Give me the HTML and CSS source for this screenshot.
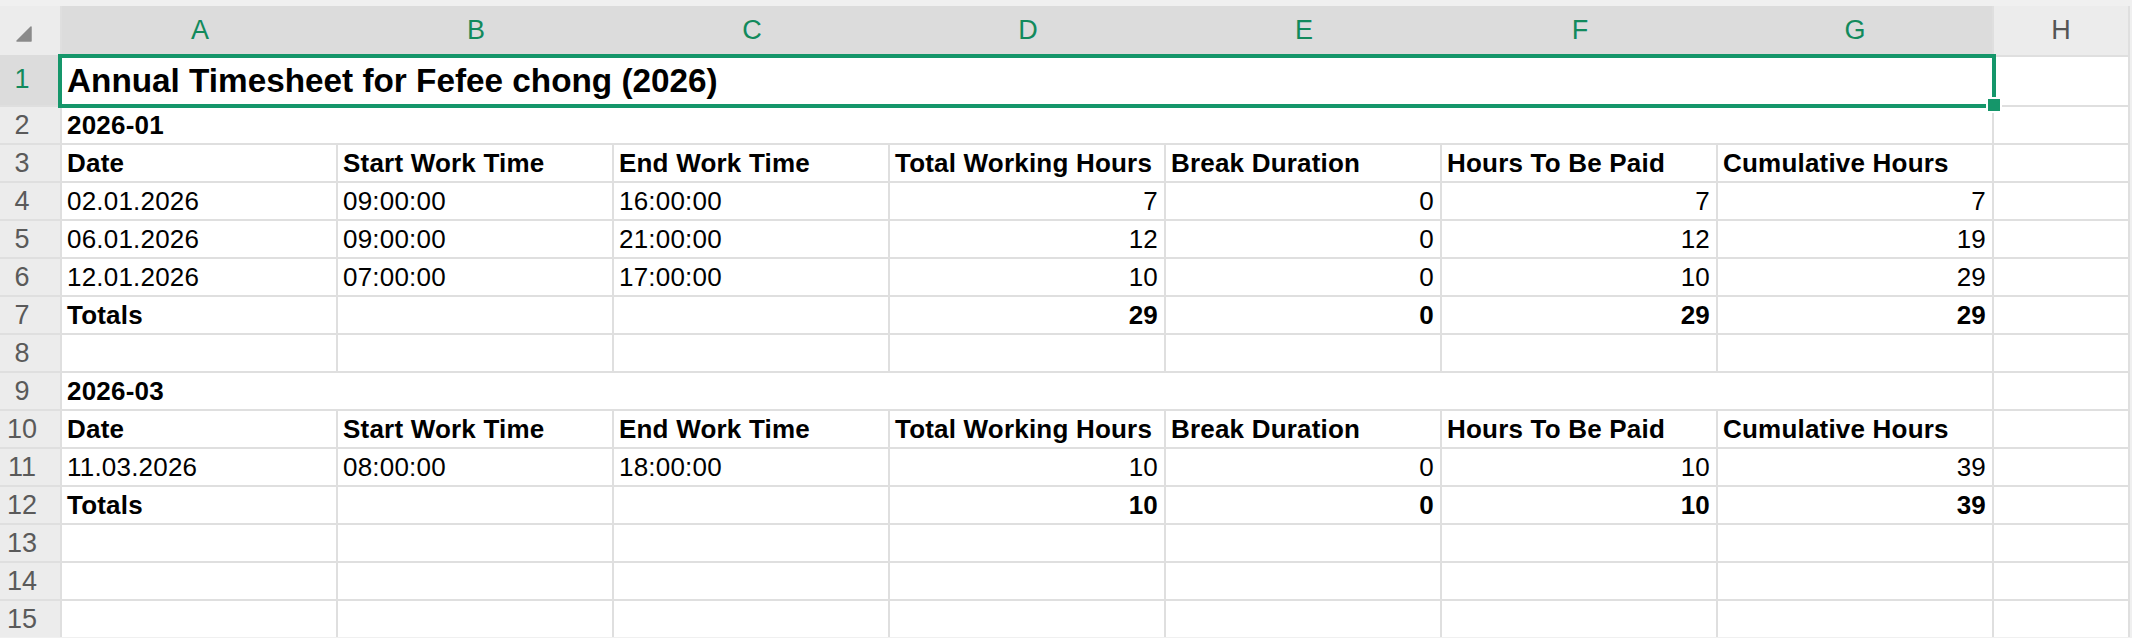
FILE: index.html
```html
<!DOCTYPE html>
<html lang="en">
<head>
  <meta charset="UTF-8">
  <title>Annual Timesheet</title>
  <link rel="stylesheet" href="styles.css">
</head>
<body>

  <div class="workbook">
    <div class="sheet">
      <!-- Column headers -->
      <div class="corner">
        <svg width="16" height="16" viewBox="0 0 16 16"><path d="M15 1 L15 15 L1 15 Z" fill="#8a8a8a" stroke="#8a8a8a" stroke-width="1.5" stroke-linejoin="round"/></svg>
      </div>
      <div class="col-head sel">A</div>
      <div class="col-head sel">B</div>
      <div class="col-head sel">C</div>
      <div class="col-head sel">D</div>
      <div class="col-head sel">E</div>
      <div class="col-head sel">F</div>
      <div class="col-head sel">G</div>
      <div class="col-head">H</div>

      <!-- Row 1 -->
      <div class="row-head sel tall">1</div>
      <div class="cell wide title">Annual Timesheet for Fefee chong (2026)</div>
      <div class="cell"></div>

      <!-- Row 2 -->
      <div class="row-head">2</div>
      <div class="cell wide b">2026-01</div>
      <div class="cell"></div>

      <!-- Row 3 -->
      <div class="row-head">3</div>
      <div class="cell b">Date</div>
      <div class="cell b">Start Work Time</div>
      <div class="cell b">End Work Time</div>
      <div class="cell b">Total Working Hours</div>
      <div class="cell b">Break Duration</div>
      <div class="cell b">Hours To Be Paid</div>
      <div class="cell b">Cumulative Hours</div>
      <div class="cell"></div>

      <!-- Row 4 -->
      <div class="row-head">4</div>
      <div class="cell">02.01.2026</div>
      <div class="cell">09:00:00</div>
      <div class="cell">16:00:00</div>
      <div class="cell num">7</div>
      <div class="cell num">0</div>
      <div class="cell num">7</div>
      <div class="cell num">7</div>
      <div class="cell"></div>

      <!-- Row 5 -->
      <div class="row-head">5</div>
      <div class="cell">06.01.2026</div>
      <div class="cell">09:00:00</div>
      <div class="cell">21:00:00</div>
      <div class="cell num">12</div>
      <div class="cell num">0</div>
      <div class="cell num">12</div>
      <div class="cell num">19</div>
      <div class="cell"></div>

      <!-- Row 6 -->
      <div class="row-head">6</div>
      <div class="cell">12.01.2026</div>
      <div class="cell">07:00:00</div>
      <div class="cell">17:00:00</div>
      <div class="cell num">10</div>
      <div class="cell num">0</div>
      <div class="cell num">10</div>
      <div class="cell num">29</div>
      <div class="cell"></div>

      <!-- Row 7 -->
      <div class="row-head">7</div>
      <div class="cell b">Totals</div>
      <div class="cell"></div>
      <div class="cell"></div>
      <div class="cell num b">29</div>
      <div class="cell num b">0</div>
      <div class="cell num b">29</div>
      <div class="cell num b">29</div>
      <div class="cell"></div>

      <!-- Row 8 -->
      <div class="row-head">8</div>
      <div class="cell"></div>
      <div class="cell"></div>
      <div class="cell"></div>
      <div class="cell"></div>
      <div class="cell"></div>
      <div class="cell"></div>
      <div class="cell"></div>
      <div class="cell"></div>

      <!-- Row 9 -->
      <div class="row-head">9</div>
      <div class="cell wide b">2026-03</div>
      <div class="cell"></div>

      <!-- Row 10 -->
      <div class="row-head">10</div>
      <div class="cell b">Date</div>
      <div class="cell b">Start Work Time</div>
      <div class="cell b">End Work Time</div>
      <div class="cell b">Total Working Hours</div>
      <div class="cell b">Break Duration</div>
      <div class="cell b">Hours To Be Paid</div>
      <div class="cell b">Cumulative Hours</div>
      <div class="cell"></div>

      <!-- Row 11 -->
      <div class="row-head">11</div>
      <div class="cell">11.03.2026</div>
      <div class="cell">08:00:00</div>
      <div class="cell">18:00:00</div>
      <div class="cell num">10</div>
      <div class="cell num">0</div>
      <div class="cell num">10</div>
      <div class="cell num">39</div>
      <div class="cell"></div>

      <!-- Row 12 -->
      <div class="row-head">12</div>
      <div class="cell b">Totals</div>
      <div class="cell"></div>
      <div class="cell"></div>
      <div class="cell num b">10</div>
      <div class="cell num b">0</div>
      <div class="cell num b">10</div>
      <div class="cell num b">39</div>
      <div class="cell"></div>

      <!-- Rows 13-15 -->
      <div class="row-head">13</div>
      <div class="cell"></div><div class="cell"></div><div class="cell"></div><div class="cell"></div>
      <div class="cell"></div><div class="cell"></div><div class="cell"></div><div class="cell"></div>

      <div class="row-head">14</div>
      <div class="cell"></div><div class="cell"></div><div class="cell"></div><div class="cell"></div>
      <div class="cell"></div><div class="cell"></div><div class="cell"></div><div class="cell"></div>

      <div class="row-head">15</div>
      <div class="cell"></div><div class="cell"></div><div class="cell"></div><div class="cell"></div>
      <div class="cell"></div><div class="cell"></div><div class="cell"></div><div class="cell"></div>

      <!-- Active selection A1:G1 -->
      <div class="selection">
        <span class="handle"></span>
      </div>
    </div>
  </div>

</body>
</html>
```

FILE: styles.css
```css
/* Page */
body {
  margin: 0;
  padding: 0;
  background-color: #f0f0f0;
  font-family: 'Liberation Sans', Arial, sans-serif;
  color: #000;
  height: 638px;
  overflow: hidden;
}

.workbook {
  padding-top: 6px;
}

/* Grid: gaps show through as cell borders */
.sheet {
  position: relative;
  display: grid;
  grid-template-columns: 60px repeat(7, 274px) 134px;
  grid-template-rows: 49px 48px;
  grid-auto-rows: 36px;
  gap: 2px;
  width: 2130px;
  background-color: #dfdfdf;
}

/* Headers */
.corner {
  background-color: #ececec;
  display: flex;
  align-items: flex-start;
  justify-content: flex-start;
  padding: 20px 0 0 16px;
  margin-bottom: -2px;
}

.col-head {
  background-color: #ececec;
  color: #555;
  font-size: 27px;
  display: flex;
  align-items: center;
  justify-content: center;
}

.row-head {
  background-color: #ececec;
  color: #5a5a5a;
  font-size: 27px;
  line-height: 36px;
  text-align: center;
  padding-right: 16px;
}

.row-head.tall {
  line-height: 48px;
}

.col-head.sel {
  background-color: #dcdcdc;
  color: #128a5c;
  margin-right: -2px;
}

.col-head.sel:nth-child(8) {
  margin-right: 0;
}

.row-head.sel {
  background-color: #dcdcdc;
  color: #128a5c;
  margin-top: -2px;
}

/* Cells */
.cell {
  background-color: #fff;
  font-size: 26px;
  letter-spacing: 0.2px;
  line-height: 36px;
  padding: 0 6px 0 5px;
  white-space: nowrap;
  overflow: hidden;
}

.wide {
  grid-column: span 7;
  overflow: visible;
}

.title {
  font-size: 33.3px;
  letter-spacing: 0;
  font-weight: bold;
  line-height: 48px;
}

.b {
  font-weight: bold;
}

.num {
  text-align: right;
}

/* Selection box and fill handle */
.selection {
  position: absolute;
  left: 58px;
  top: 48px;
  width: 1938px;
  height: 54px;
  box-sizing: border-box;
  border: 4px solid #15966a;
  pointer-events: none;
}

.handle {
  position: absolute;
  right: -10px;
  bottom: -9px;
  width: 12px;
  height: 12px;
  background-color: #15966a;
  border: 2px solid #fff;
}
```
